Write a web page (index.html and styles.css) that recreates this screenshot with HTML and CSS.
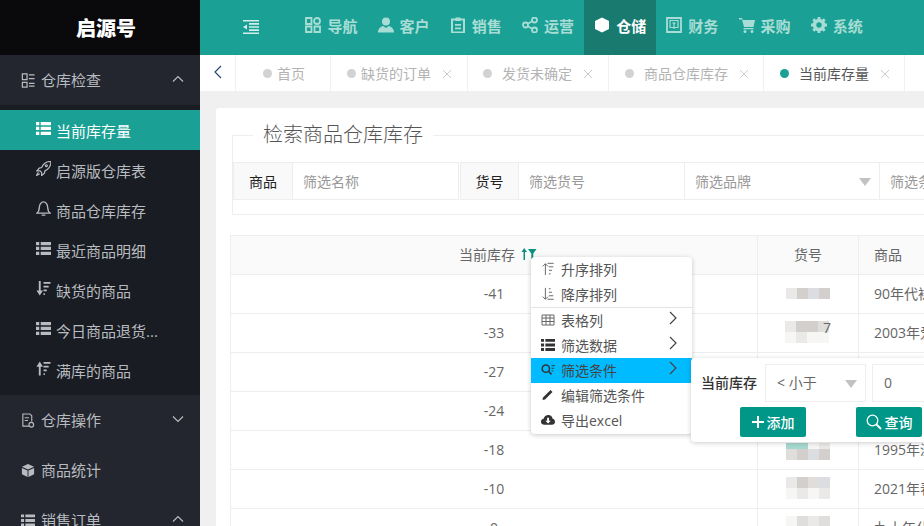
FILE: index.html
```html
<!DOCTYPE html>
<html lang="zh-CN">
<head>
<meta charset="utf-8">
<title>当前库存量</title>
<link rel="stylesheet" href="styles.css">
</head>
<body>
<svg class="defs" width="0" height="0">
  <symbol id="list" viewBox="0 0 16 14"><path d="M0 0h3.5v3.4H0zM5 0h11v3.4H5zM0 5.2h3.5v3.4H0zM5 5.2h11v3.4H5zM0 10.4h3.5v3.4H0zM5 10.4h11v3.400H5z" fill="currentColor"/></symbol>
  <symbol id="sortdown" viewBox="0 0 16 16"><path d="M3 0h2v10h2.500L4 15.500.5 10H3z" fill="currentColor"/><path d="M8 1h7.500v2H8zM8 5h5.500v2H8zM8 9h3.500v2H8zM8 13h1.500v2H8z" fill="currentColor"/></symbol>
  <symbol id="sortup" viewBox="0 0 16 16"><path d="M3 15.500h2V6h2.500L4 .5.500 6H3z" fill="currentColor"/><path d="M8 1h7.500v2H8zM8 5h5.500v2H8zM8 9h3.500v2H8zM8 13h1.500v2H8z" fill="currentColor"/></symbol>
  <symbol id="thinup" viewBox="0 0 14 16"><path d="M4 15V2M1 5l3-3 3 3M6.500 1.500h7M8 5.500h5M8 9.500h3.500M8 13.500h2" fill="none" stroke="currentColor" stroke-width="1.100"/></symbol>
  <symbol id="thindown" viewBox="0 0 14 16"><path d="M4 1v13M1 11l3 3 3-3M8 2h2M8 6h3.500M8 10h5M6.500 14h7" fill="none" stroke="currentColor" stroke-width="1.100"/></symbol>
  <symbol id="up" viewBox="0 0 12 8"><path d="M1 6.500 6 1.500l5 5" fill="none" stroke="currentColor" stroke-width="1.200"/></symbol>
  <symbol id="right" viewBox="0 0 8 14"><path d="M1 1l6 6-6 6" fill="none" stroke="currentColor" stroke-width="1.200"/></symbol>
  <symbol id="x" viewBox="0 0 10 10"><path d="M1 1l8 8M9 1l-8 8" fill="none" stroke="currentColor" stroke-width="1"/></symbol>
  <symbol id="search" viewBox="0 0 16 16"><circle cx="6.500" cy="6.500" r="5.300" fill="none" stroke="currentColor" stroke-width="1.300"/><path d="M10.500 10.500l4.500 4.500" stroke="currentColor" stroke-width="1.800"/></symbol>
</svg>

<div class="app">
  <aside class="sidebar">
    <div class="logo">启源号</div>
    <div class="group">
      <svg class="gicon" viewBox="0 0 14 16"><path d="M1 1h5v6H1zM1 10h5v5H1z" fill="none" stroke="currentColor" stroke-width="1.300"/><path d="M8 2h6M8 6h6M8 11h6M8 14h6" stroke="currentColor" stroke-width="1.300"/></svg>
      <span class="gtext">仓库检查</span>
      <svg class="chev"><use href="#up"/></svg>
    </div>
    <nav class="submenu">
      <a class="sub active"><svg class="sicon"><use href="#list"/></svg><span>当前库存量</span></a>
      <a class="sub"><svg class="sicon" viewBox="0 0 16 16"><path d="M15.500 .5c-4.500 0-7.500 2-9.500 6.500L3.500 7.500 1 10.500h3.300l1.700 1.700v3.300l3-2.500.5-2.500c4.500-2.200 6.500-5.500 6.500-10zM2.500 12 .5 15.500 4 13.500M11 4a1 1 0 1 0 .1 0z" fill="none" stroke="currentColor" stroke-width="1.300"/></svg><span>启源版仓库表</span></a>
      <a class="sub"><svg class="sicon" viewBox="0 0 16 16"><path d="M.8 13c2.200-1.500 2.700-3 2.700-6S5.500 1 8 1s4.500 3 4.500 6 .5 4.500 2.700 6zM6 15h4" fill="none" stroke="currentColor" stroke-width="1.400"/></svg><span>商品仓库库存</span></a>
      <a class="sub"><svg class="sicon"><use href="#list"/></svg><span>最近商品明细</span></a>
      <a class="sub"><svg class="sicon"><use href="#sortdown"/></svg><span>缺货的商品</span></a>
      <a class="sub"><svg class="sicon"><use href="#list"/></svg><span>今日商品退货...</span></a>
      <a class="sub"><svg class="sicon"><use href="#sortup"/></svg><span>满库的商品</span></a>
    </nav>
    <div class="group">
      <svg class="gicon" viewBox="0 0 14 16"><path d="M9 14H1.500V1H9l2 2v6M3.500 5H8M3.500 8H7" fill="none" stroke="currentColor" stroke-width="1.200"/><circle cx="10.500" cy="12.500" r="2.500" fill="none" stroke="currentColor" stroke-width="1.200"/></svg>
      <span class="gtext">仓库操作</span>
      <svg class="chev flip"><use href="#up"/></svg>
    </div>
    <div class="group">
      <svg class="gicon" viewBox="0 0 14 16"><path d="M7 1l6.500 3L7 7 .5 4zM.5 5.200 6.500 8v7L.5 12zM13.500 5.200 7.500 8v7l6-3z" fill="currentColor"/></svg>
      <span class="gtext">商品统计</span>
    </div>
    <div class="group">
      <svg class="gicon"><use href="#list"/></svg>
      <span class="gtext">销售订单</span>
      <svg class="chev"><use href="#up"/></svg>
    </div>
  </aside>

  <div class="main">
    <header class="topbar">
      <div class="collapse">
        <svg viewBox="0 0 16 14" width="16" height="14"><path d="M0 0h16v1.600H0zM6 3.100h10v1.600H6zM6 6.200h10v1.600H6zM6 9.300h10v1.600H6zM0 12.400h16V14H0zM4 4.500v5L0 7z" fill="currentColor"/></svg>
      </div>
      <a class="nav"><svg viewBox="0 0 16 16"><path d="M1 1h5.500v6H1zM1 9.500h5.500V15H1zM9.500 9.500H15V15H9.500z" fill="none" stroke="currentColor" stroke-width="1.800"/><circle cx="12" cy="4" r="3" fill="none" stroke="currentColor" stroke-width="1.800"/></svg><span>导航</span></a>
      <a class="nav"><svg viewBox="0 0 16 16"><circle cx="8" cy="4.500" r="4" fill="currentColor"/><path d="M0 15.500c0-4 3-6 5-6.500l3 2 3-2c2 .5 5 2.500 5 6.500z" fill="currentColor"/></svg><span>客户</span></a>
      <a class="nav"><svg viewBox="0 0 16 16"><path d="M2 2.500h12v13H2z" fill="none" stroke="currentColor" stroke-width="2"/><path d="M5.500 .5h5v3.500h-5zM5 7h6v1.800H5zM5 10.500h6v1.800H5z" fill="currentColor"/></svg><span>销售</span></a>
      <a class="nav"><svg viewBox="0 0 16 16"><circle cx="3.500" cy="8" r="2.500" fill="none" stroke="currentColor" stroke-width="1.800"/><circle cx="12.500" cy="3" r="2.500" fill="none" stroke="currentColor" stroke-width="1.800"/><circle cx="12.500" cy="13" r="2.500" fill="none" stroke="currentColor" stroke-width="1.800"/><path d="M5.500 7l5-3M5.500 9l5 3" stroke="currentColor" stroke-width="1.500"/></svg><span>运营</span></a>
      <a class="nav on"><svg viewBox="0 0 16 16"><path d="M8 .5l7 3.500v8l-7 3.500L1 12V4z" fill="currentColor"/></svg><span>仓储</span></a>
      <a class="nav"><svg viewBox="0 0 16 16"><path d="M1 1h14v14H1z" fill="none" stroke="currentColor" stroke-width="1.800"/><path d="M4 3.500h8v7H4z" fill="none" stroke="currentColor" stroke-width="1.200"/><path d="M6 5.500h4L8 8zM7.400 7h1.200v5H7.400z" fill="currentColor"/></svg><span>财务</span></a>
      <a class="nav"><svg viewBox="0 0 16 16"><path d="M0 1h3l.7 2H16l-1.500 7H5L3 2.500H0z" fill="currentColor"/><path d="M4.500 11h10v1.300h-10z" fill="currentColor"/><circle cx="6" cy="14.500" r="1.500" fill="currentColor"/><circle cx="13" cy="14.500" r="1.500" fill="currentColor"/></svg><span>采购</span></a>
      <a class="nav"><svg viewBox="0 0 16 16"><circle cx="8" cy="8" r="4.500" fill="none" stroke="currentColor" stroke-width="3.600"/><path d="M8 0v3M8 13v3M0 8h3M13 8h3M2.300 2.300l2.200 2.200M11.500 11.500l2.200 2.200M13.700 2.300l-2.200 2.200M4.500 11.500l-2.200 2.200" stroke="currentColor" stroke-width="2.800"/></svg><span>系统</span></a>
    </header>

    <div class="tabs">
      <div class="back"><svg><use href="#right"/></svg></div>
      <div class="tab t-home"><i class="dot"></i><span>首页</span></div>
      <div class="tab t-a"><i class="dot"></i><span>缺货的订单</span><svg class="close"><use href="#x"/></svg></div>
      <div class="tab t-b wide"><i class="dot"></i><span>发货未确定</span><svg class="close"><use href="#x"/></svg></div>
      <div class="tab t-c wide"><i class="dot"></i><span>商品仓库库存</span><svg class="close"><use href="#x"/></svg></div>
      <div class="tab t-b wide current"><i class="dot"></i><span>当前库存量</span><svg class="close"><use href="#x"/></svg></div>
    </div>

    <div class="content">
      <section class="card">
        <fieldset class="search">
          <legend>检索商品仓库库存</legend>
          <div class="form-row">
            <label class="lbl w-a">商品</label>
            <div class="inp w-b">筛选名称</div>
            <label class="lbl w-c gap">货号</label>
            <div class="inp w-b">筛选货号</div>
            <div class="inp w-d">筛选品牌<i class="caret"></i></div>
            <div class="inp w-e">筛选条件</div>
          </div>
        </fieldset>

        <div class="table">
          <div class="th c1 hd">当前库存
            <svg class="sort-ic" viewBox="0 0 16 12"><path d="M2.500 12V4H.5L3.200 0 6 4H4v8z" fill="#0a927f"/><path d="M7 1h8.500l-3.200 4.500V11h-2V5.500z" fill="#0a927f"/></svg>
          </div>
          <div class="th c2">货号</div>
          <div class="th c3">商品</div>

          <div class="td c1">-41</div>
          <div class="td c2"><span class="mosaic"><b class="m1"></b><b class="m3"></b><b class="m4"></b><b class="m3"></b></span></div>
          <div class="td c3">90年代袜子系列</div>

          <div class="td c1">-33</div>
          <div class="td c2"><span class="mosaic"><b class="m1"></b><b class="m3"></b><b class="m3"></b><b class="m2"></b><b class="m0"></b><b class="m1"></b><b class="m0"></b><b class="m0"></b></span><em class="tail">7</em></div>
          <div class="td c3">2003年爱心系列</div>

          <div class="td c1">-27</div>
          <div class="td c2"></div>
          <div class="td c3"></div>

          <div class="td c1">-24</div>
          <div class="td c2"></div>
          <div class="td c3"></div>

          <div class="td c1">-18</div>
          <div class="td c2"><span class="mosaic r5"><b class="m5"></b><b class="m5"></b><b class="m0"></b><b class="m1"></b><b class="m2"></b><b class="m3"></b><b class="m4"></b><b class="m3"></b></span></div>
          <div class="td c3">1995年湿巾系列</div>

          <div class="td c1">-10</div>
          <div class="td c2"><span class="mosaic"><b class="m1"></b><b class="m3"></b><b class="m2"></b><b class="m4"></b><b class="m0"></b><b class="m1"></b><b class="m0"></b><b class="m1"></b></span></div>
          <div class="td c3">2021年春季系列</div>

          <div class="td c1">0</div>
          <div class="td c2"><span class="mosaic"><b class="m0"></b><b class="m2"></b><b class="m1"></b><b class="m2"></b><b class="m0"></b><b class="m1"></b><b class="m0"></b><b class="m0"></b></span></div>
          <div class="td c3">九十年代系列</div>
        </div>
      </section>
    </div>
  </div>
</div>

<div class="ctx">
  <div class="ctx-sec">
    <a class="ci"><svg class="cic"><use href="#thinup"/></svg><span>升序排列</span></a>
    <a class="ci"><svg class="cic"><use href="#thindown"/></svg><span>降序排列</span></a>
  </div>
  <div class="ctx-sec">
    <a class="ci"><svg class="cic" viewBox="0 0 14 12"><path d="M1 1h12v10H1zM1 4h12M1 7.500h12M5 1v10M9 1v10" fill="none" stroke="currentColor" stroke-width="1"/></svg><span>表格列</span><svg class="arr"><use href="#right"/></svg></a>
    <a class="ci"><svg class="cic dark"><use href="#list"/></svg><span>筛选数据</span><svg class="arr"><use href="#right"/></svg></a>
    <a class="ci hot"><svg class="cic dark" viewBox="0 0 16 14"><circle cx="5.500" cy="5.500" r="4.200" fill="none" stroke="currentColor" stroke-width="1.700"/><path d="M8.500 8.500l3.500 3.500" stroke="currentColor" stroke-width="1.800"/><path d="M12 2h4M12 5h3M12 8h2" stroke="currentColor" stroke-width="1"/></svg><span>筛选条件</span><svg class="arr"><use href="#right"/></svg></a>
    <a class="ci"><svg class="cic dark" viewBox="0 0 14 14"><path d="M2 9.500 9.500 2l2 2L4 11.500 1.500 12z" fill="currentColor"/></svg><span>编辑筛选条件</span></a>
    <a class="ci"><svg class="cic dark" viewBox="0 0 16 12"><path d="M4 11.500C1.500 11.500 0 10 0 8s1.500-3.200 3-3.300C3.500 2 5.800.3 8.500.3 11 .3 13 2 13.300 4.500 15 4.800 16 6.200 16 8c0 2-1.500 3.500-3.500 3.500z" fill="currentColor"/><path d="M7 3.500h2.200v3.300h2L8.100 10 5 6.800h2z" fill="#fff"/></svg><span>导出excel</span></a>
  </div>

  <div class="subpanel">
    <div class="sp-row">
      <span class="sp-label">当前库存</span>
      <div class="sp-select">&lt; 小于<i class="caret"></i></div>
      <div class="sp-input">0</div>
    </div>
    <div class="sp-btns">
      <a class="btn"><svg viewBox="0 0 12 12" width="12" height="12"><path d="M5 0h2v5h5v2H7v5H5V7H0V5h5z" fill="currentColor"/></svg>添加</a>
      <a class="btn"><svg viewBox="0 0 16 16" width="16" height="16"><use href="#search"/></svg>查询</a>
    </div>
  </div>
</div>
</body>
</html>
```

FILE: styles.css
```css
* { box-sizing: border-box; }
html, body { margin: 0; height: 100%; overflow: hidden; }
body {
  position: relative;
  font-family: "Open Sans", "Noto Sans CJK SC", sans-serif;
  font-size: 14px;
  color: #555;
  background: #f0f0f0;
}
.defs { position: absolute; }
a { color: inherit; text-decoration: none; }

.app { display: flex; width: 924px; height: 526px; overflow: hidden; }

/* sidebar */
.sidebar { flex: 0 0 200px; background: #23262f; color: #b8bbbf; overflow: hidden; }
.logo {
  height: 55px; background: #0a0a0c; color: #fff;
  font-size: 20px; font-weight: 900; padding-left: 12px;
  display: flex; align-items: center; justify-content: center;
}
.group { height: 50px; display: flex; align-items: center; padding: 0 15px 0 21px; font-size: 15px; }
.gicon { width: 14px; height: 15px; flex: none; margin-right: 6px; }
.gtext { flex: 1; line-height: 50px; }
.chev { width: 12px; height: 8px; flex: none; margin: -3px 1px 0 0; }
.flip { transform: rotate(180deg); }
.submenu { background: #191c22; padding: 5px 0; }
.sub { height: 40px; display: flex; align-items: center; padding-left: 36px; font-size: 15px; }
.sub.active { background: #1aa094; color: #fff; }
.sicon { width: 15px; height: 15px; flex: none; margin-right: 5px; margin-top: -3px; }

/* main */
.main { flex: 0 0 724px; width: 724px; overflow: hidden; display: flex; flex-direction: column; }
.topbar { height: 55px; flex: none; background: #1aa094; display: flex; color: #a8ddd5; }
.collapse { width: 95.4px; padding: 19px 0 0 43px; color: #d3eeea; flex: none; }
.nav { width: 72.2px; flex: none; display: flex; align-items: center; padding: 0 0 5px 10px; gap: 6px; font-size: 15px; font-weight: 700; }
.nav svg { width: 16px; height: 16px; flex: none; }
.nav.on { background: #197a70; color: #fff; }

.tabs { height: 36px; flex: none; background: #fff; display: flex; color: #b3b3b3; }
.back { width: 36px; border-right: 1px solid #f1f1f1; display: flex; align-items: center; justify-content: center; color: #2b4a75; }
.back svg { width: 8px; height: 14px; transform: rotate(180deg); margin-top: -2px; }
.tab { display: flex; align-items: center; padding-left: 16px; border-right: 1px solid #f1f1f1; flex: none; }
.t-home { width: 95px; padding-left: 27px; }
.t-a { width: 137px; padding-left: 16px; }
.t-b { width: 141px; }
.t-c { width: 155px; }
.dot { width: 9px; height: 9px; border-radius: 50%; background: #d2d2d2; flex: none; margin-right: 5px; }
.wide .dot { margin-right: 10px; }
.t-b.wide:not(.current) { padding-left: 15px; }
.close { width: 10px; height: 10px; color: #ccc; flex: none; margin-left: 11px; margin-top: 2px; }
.current { color: #555; }
.current .dot { background: #1aa094; }

.content { flex: 1; padding: 17px 0 0 16px; min-height: 0; overflow: hidden; }
.card { width: 760px; height: 440px; background: #fff; border-radius: 3px; padding: 17px 0 0 14px; }

.search {
  margin: 0 0 20px 2px; padding: 17px 0 14px 0; width: 760px;
  border: 1px solid #eee; height: 90px;
  min-width: 0;
}
legend { margin-left: 20px; padding: 0 10px; font-size: 20px; line-height: 20px; color: #555; font-weight: 300; height: 20px; }
.form-row { display: flex; height: 38px; font-size: 14px; white-space: nowrap; }
.lbl { flex: none; background: #f9f9f9; border: 1px solid #eee; border-right: 0; color: #222; display: flex; align-items: center; justify-content: center; }
.w-a { width: 59px; }
.w-c { width: 58px; }
.gap { margin-left: 1px; }
.inp { flex: none; position: relative; border: 1px solid #eee; color: #999; display: flex; align-items: center; padding-left: 10px; background: #fff; }
.w-b { width: 167px; }
.w-d { width: 196px; margin-left: -1px; }
.w-e { width: 150px; margin-left: -1px; }
.caret { position: absolute; right: 8px; top: 15px; border: 6.5px solid transparent; border-top: 8px solid #c2c2c2; border-bottom: 0; }

.table {
  display: grid;
  grid-template-columns: 527px 101px 200px;
  grid-auto-rows: 39px;
  width: 828px;
  border-left: 1px solid #eee;
  border-top: 1px solid #eee;
}
.th, .td { border-right: 1px solid #eee; border-bottom: 1px solid #eee; display: flex; align-items: center; white-space: nowrap; overflow: hidden; padding-bottom: 2px; }
.th { background: #fafafa; height: 39px; color: #666; }
.td { color: #666; }
.c1, .c2 { justify-content: center; }
.c3 { padding-left: 15px; }
.hd { padding-left: 8px; }
.sort-ic { width: 16px; height: 12px; margin-left: 6px; }
.mosaic { display: inline-grid; grid-template-columns: repeat(4, 11px); grid-auto-rows: 11px; }
.mosaic.r5 { grid-template-rows: 6px 11px; margin-bottom: -5px; }
.mosaic b { display: block; }
.m0 { background: #f6f6f5; }
.m1 { background: #ebe9e8; }
.m2 { background: #dfdedd; }
.m3 { background: #d3cfcd; }
.m4 { background: #dcdde0; }
.m5 { background: #a6d8cf; }
.tail { font-style: normal; margin-left: -6px; margin-top: -10px; color: #666; }

/* floating context menu */
.ctx {
  position: absolute; left: 531px; top: 257px; width: 161px; height: 177px;
  background: #fff; border-radius: 4px;
  box-shadow: 0 1px 5px rgba(0, 0, 0, .22);
  color: #555;
}
.ctx-sec + .ctx-sec { border-top: 1px solid #e4e4e4; }
.ctx-sec:first-child { height: 50px; }
.ci { height: 25px; display: flex; align-items: center; padding: 0 0 2px 10px; position: relative; }
.cic { width: 14px; height: 14px; flex: none; margin-right: 6px; color: #666; }
.cic.dark { color: #333; }
.arr { position: absolute; right: 15px; top: 3px; width: 8px; height: 14px; color: #444; }
.hot { background: #00bbff; color: #444; }

.subpanel {
  position: absolute; left: 160px; top: 101px; width: 233px; height: 84px; overflow: hidden;
  background: #fff; border-radius: 4px 0 0 4px;
  box-shadow: 0 1px 5px rgba(0, 0, 0, .2);
  padding: 6px 0 0 10px;
}
.sp-row { display: flex; align-items: center; height: 38px; }
.sp-label { flex: none; width: 64px; color: #333; font-weight: 500; padding-bottom: 2px; }
.sp-select, .sp-input { flex: none; position: relative; height: 38px; border: 1px solid #eee; display: flex; align-items: center; padding: 0 0 2px 11px; color: #666; }
.sp-select { width: 101px; }
.sp-input { width: 100px; margin-left: 6px; }
.sp-btns { display: flex; gap: 50px; padding: 5px 0 0 39px; }
.btn {
  flex: none; width: 66px; height: 30px; background: #009688; color: #fff; border-radius: 2px; padding-bottom: 1px;
  display: flex; align-items: center; justify-content: center; gap: 3px; font-weight: 500;
}
```
